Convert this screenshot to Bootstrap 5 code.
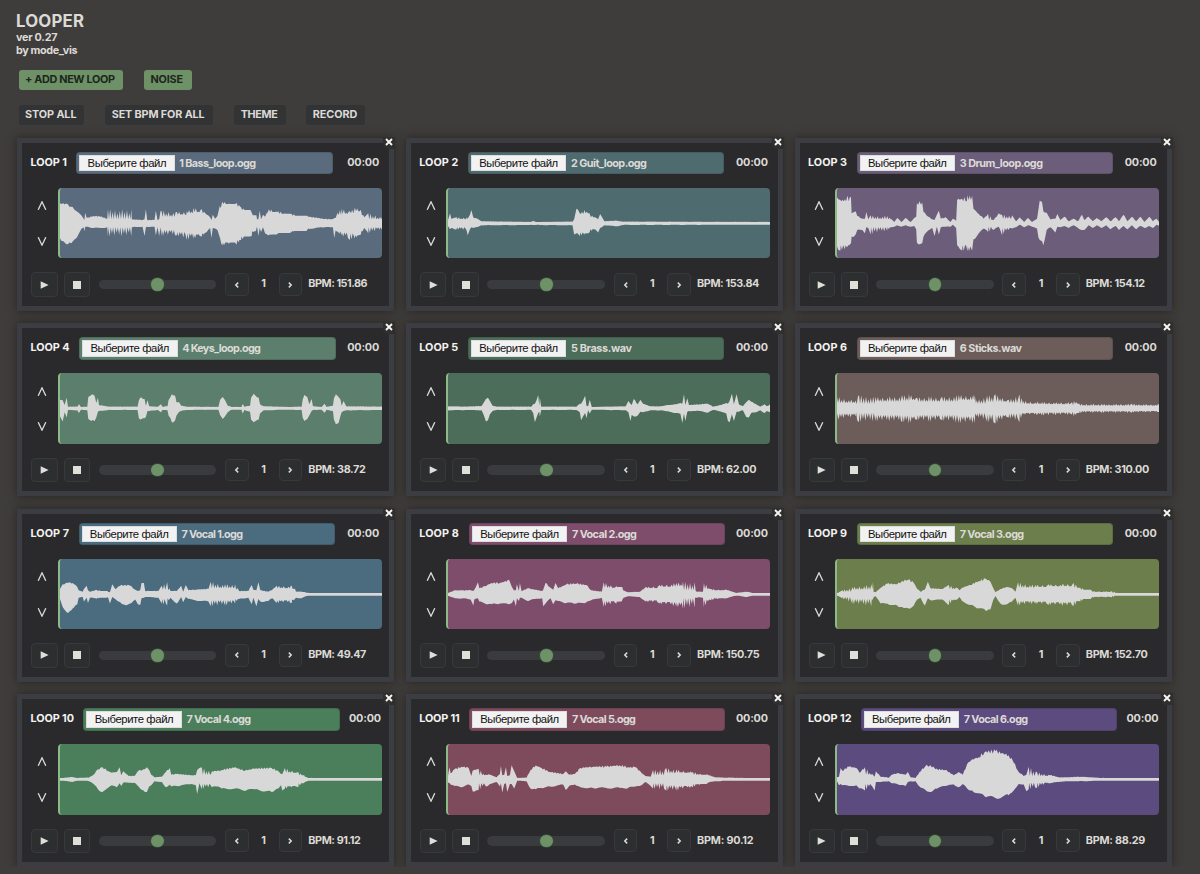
<!DOCTYPE html>
<html lang="ru">
<head>
<meta charset="utf-8">
<meta name="viewport" content="width=device-width, initial-scale=1">
<title>Looper</title>
<link href="https://cdn.jsdelivr.net/npm/bootstrap@5.3.0/dist/css/bootstrap.min.css" rel="stylesheet">
<style>
body{background:#3f3d3b;color:#dcdad6;font-family:Inter,"Liberation Sans",sans-serif;font-size:10.8px;font-weight:700;line-height:12.4px;overflow:hidden}
[data-fit]{white-space:nowrap;display:inline-block}
h1{font-size:16.8px;font-weight:700;line-height:20px;color:#dcdad6}
.page-head{padding:11px 0 0 16px}
.tool-row{padding-left:2.5px}
.tool{height:20px;border:0;border-radius:3px;background:#323334;color:#dcdad6;font-size:10.8px;font-weight:700;line-height:20px;padding:0 0 0 6.5px;text-align:left}
.tool-main{background:#6e9167;color:#1b271b}
.loops{display:grid;grid-template-columns:repeat(3,377px);column-gap:11.75px;row-gap:12.4px;padding:13.2px 0 0 17px}
.loop{position:relative;height:173px;border:5px solid #3b3d42;background:#2a2a2c;box-shadow:0 0 9px rgba(25,18,16,.6)}
.loop-close{position:absolute;right:-6px;top:-6px;width:12px;height:12px;background:#2f2f30;border:0;padding:0;border-radius:0 0 0 5px;display:flex}
.loop-close svg{margin:1px 0 0 2px}
.loop-head{height:22.4px;margin-top:9.2px;padding-left:8.5px}
.loop-title{color:#f4f3f0}
.file-box{width:256.4px;height:22.4px;border-radius:4px;border:1px solid rgba(20,25,25,.16);padding-left:2px}
.file-btn{width:95.5px;height:16.4px;background:#f2f2f2;border:1px solid #ddd;color:#111;font:400 11.3px/14.5px "Liberation Sans",Arial,sans-serif;text-align:center;margin-right:4.5px}
.file-name{padding-top:1.6px}
.loop-mid{margin-top:13.3px;height:70.6px}
.arrows{width:35.5px;height:70.6px;padding:13.5px 0 12.5px 4px}
.wave{width:324.2px;height:70.6px;border-radius:4px;overflow:hidden;border-left:2px solid #8dbb88;display:block}
.loop-foot{margin-top:13.8px;padding-left:9px;height:25px}
.key{border:1.8px solid #38393c;border-radius:4px;background:#2d2e30;padding:0;display:flex;align-items:center;justify-content:center}
.key-lg{width:26.5px;height:24.6px}
.key-sm{width:23.6px;height:22.8px}
.track{width:117.6px;height:9.4px;border-radius:5px;background:#393b3f;display:flex;align-items:center;justify-content:center;margin:0 8.7px}
.thumb{width:12.6px;height:12.6px;border-radius:50%;background:#6e9167;box-shadow:0 0 0 .7px #35503a;flex:none}
.count{width:30px}
</style>
</head>
<body>
<header class="page-head">
  <h1 style="margin-bottom:1.4px"><span data-fit="68">LOOPER</span></h1>
  <div><span data-fit="41.5">ver 0.27</span></div>
  <div><span data-fit="61.5">by mode_vis</span></div>
  <div class="tool-row d-flex" style="margin-top:12.8px">
    <button class="tool tool-main" style="width:104px"><span data-fit="90">+ ADD NEW LOOP</span></button>
    <button class="tool tool-main" style="width:47.5px;margin-left:21.5px"><span data-fit="32.5">NOISE</span></button>
  </div>
  <div class="tool-row d-flex" style="margin-top:14.7px">
    <button class="tool" style="width:65px"><span data-fit="51.5">STOP ALL</span></button>
    <button class="tool" style="width:107.5px;margin-left:21.7px"><span data-fit="93">SET BPM FOR ALL</span></button>
    <button class="tool" style="width:51.5px;margin-left:21.5px"><span data-fit="37">THEME</span></button>
    <button class="tool" style="width:59px;margin-left:20.6px"><span data-fit="44.5">RECORD</span></button>
  </div>
</header>
<main class="loops" id="loops"></main>

<script src="https://cdn.jsdelivr.net/npm/bootstrap@5.3.0/dist/js/bootstrap.bundle.min.js"></script>
<script>
// Envelope points: x, height above, height below, and the level a ragged stretch falls back to.
const loops = [
 {n:'LOOP 1',nw:36.3,bx:45.8,c:'#5b6b7e',f:'1 Bass_loop.ogg',fw:76.7,bpm:'151.86',bw:59.3,w:'4,60,45 14,60,54 28,57,63 38,50,60 48,40,48 60,32,32 68,24,17 75,14,12 77,10,24 80,32,10 84,16,10 105,22,14 125,20,14 146,14,12 148,42,40,12 218,42,38 220,12,12 252,10,10 258,12,38 262,42,12 266,10,10 288,10,10 292,38,36 297,10,12 302,12,38 306,36,12 309,38,38,20 355,34,36,26 385,36,50,30 405,46,46,33 430,42,40,30 445,26,26 455,18,14 459,10,44 463,26,14 470,14,16 477,22,20 484,52,42,46 492,64,66,58 535,62,64,50 548,48,50,40 580,32,38,24 596,12,10 600,12,38 604,38,14 608,12,26 614,26,12 620,20,30 632,42,36,34 660,36,30,29 700,28,26,23 750,20,16 800,13,12 824,12,12 828,16,44 832,16,22 838,32,26,25 850,44,36,28 875,36,50,30 890,47,46,36 908,40,34,24 918,18,14 930,30,30,12 972,20,20'},
 {n:'LOOP 2',nw:39,bx:48.7,c:'#4e6b70',f:'2 Guit_loop.ogg',fw:76,bpm:'153.84',bw:62.3,w:'4,10,8 10,30,18 14,14,14 30,18,18,12 60,18,22,12 63,14,36 70,26,18 74,40,12 80,18,14 95,12,10 104,6,6 250,4,5 262,7,5 268,4,5 378,5,6 383,12,34 390,44,30 400,30,38,28 414,40,34,30 430,28,26,18 445,18,18 455,12,28 461,28,14 466,20,12 474,6,6 510,8,9 530,5,5 972,4,4'},
 {n:'LOOP 3',nw:39,bx:48.7,c:'#6c5d7b',f:'3 Drum_loop.ogg',fw:83.3,bpm:'154.12',bw:59.3,w:'4,78,70 14,70,82,66 28,72,78,66 36,82,70,66 46,78,60 48,30,40 60,36,34 65,22,20 80,14,20 88,14,30 92,34,12 98,12,14 105,24,34,12 155,22,22,12 168,12,12 176,4,10 185,16,6 198,4,10 210,16,6 225,4,10 236,16,8 242,20,18 244,60,58 260,62,60,45 264,34,40 278,20,22 290,12,14 297,10,38 304,26,10 310,38,34 316,14,12 330,18,10 345,4,10 352,14,4 362,8,14 365,70,66 380,74,82,66 396,84,84,70 410,82,82 414,44,48 430,28,30 445,14,16 458,28,26,10 475,10,20 490,30,10 500,26,36,14 530,24,16 542,6,12 553,18,4 566,4,12 578,16,6 590,4,10 605,14,16 609,40,42 613,68,50 620,64,54 624,36,66 634,32,20 645,12,12 660,14,28 666,28,10 675,10,12 688,20,8 700,6,14 715,14,6 728,6,14 740,26,20 747,10,20 760,20,6 772,6,14 785,16,6 798,6,14 813,18,6 826,6,18 841,18,8 851,6,20 865,26,8 877,6,18 890,20,6 903,6,18 915,20,8 928,4,14 942,20,8 953,6,14 964,14,4 972,2,8'},
 {n:'LOOP 4',nw:39,bx:48.7,c:'#5b7f6c',f:'4 Keys_loop.ogg',fw:78.7,bpm:'38.72',bw:57.5,w:'4,26,24 12,24,40 18,10,12 24,32,28 28,5,5 56,5,6 61,12,14 67,4,4 86,5,6 89,34,32 98,40,38 108,38,38 113,16,28 118,32,10 121,10,8 150,5,5 237,5,5 241,24,30 245,32,34 258,28,30 262,8,26 267,24,8 272,6,8 298,5,5 307,12,12 312,5,5 327,6,6 330,24,22 336,34,30 340,42,42 350,38,36 354,18,22 362,18,10 368,8,8 384,5,5 480,4,4 485,26,20 493,34,32 500,24,24 508,8,12 520,4,4 549,4,4 553,13,16 558,5,5 575,8,10 578,32,34 586,44,42 595,34,36 601,32,34 605,12,16 616,6,6 690,4,4 730,5,5 733,26,28 738,40,38 747,34,32 753,12,22 760,28,8 764,6,5 790,4,4 799,14,13 805,4,4 824,8,8 827,30,34 833,42,48 841,34,44 847,26,22 850,8,12 856,22,8 864,6,6 972,5,5'},
 {n:'LOOP 5',nw:39,bx:48.7,c:'#4d6d5b',f:'5 Brass.wav',fw:61,bpm:'62.00',bw:59.5,w:'4,6,6 60,5,5 105,7,6 112,18,22 118,28,40 124,32,36 130,22,18 138,8,8 150,5,5 254,5,5 260,12,14 265,14,42 270,24,28 275,40,14 278,8,10 280,32,24 284,5,5 390,5,5 400,14,12 404,14,36 410,24,24 416,38,14 420,8,30 425,6,6 430,26,16 436,4,4 538,6,6 546,22,12 552,14,38 556,10,20 562,28,24 574,12,22 582,26,10 590,14,12 612,6,6 645,6,6 660,9,9 690,12,14 702,16,16 708,14,44 713,42,16 717,10,38 723,30,10 728,10,8 760,12,8 785,14,13 800,5,5 825,10,10 840,16,16 845,14,38 850,22,42 857,44,18 863,12,38 871,42,10 878,12,10 890,6,6 900,18,26 908,26,28 915,20,14 930,12,12 942,5,6 955,12,14 962,6,8 972,12,12'},
 {n:'LOOP 6',nw:39,bx:48.7,c:'#6c5d5b',f:'6 Sticks.wav',fw:62.3,bpm:'310.00',bw:63.5,w:'4,34,36,16 60,24,24,12 70,40,42,14 120,34,38,20 200,38,40,22 220,42,46,24 245,32,34,20 280,36,40,20 320,34,36,20 370,40,44,24 418,40,44,16 424,24,24,14 455,38,40,18 480,42,46,20 520,26,28,16 552,42,42,14 564,22,18,13 620,19,22,12 710,18,19,10 716,22,24,14 732,14,14,8 800,13,13,8 890,14,13,8 972,12,11'},
 {n:'LOOP 7',nw:38.5,bx:48,c:'#4b6b7e',f:'7 Vocal 1.ogg',fw:61.5,bpm:'49.47',bw:58,w:'4,16,14 12,30,38 22,34,52 34,36,50 46,30,40 56,22,30 60,12,10 72,8,8 76,16,22 84,26,10 88,12,26 94,8,10 115,13,13,10 148,8,8 154,6,28 161,30,8 170,16,14 185,26,24 200,28,32 215,26,28 230,14,16 238,10,30 245,12,32 249,34,12 256,34,10 260,10,8 300,10,10 310,26,28,14 326,36,34,12 336,10,10 355,10,28 368,26,8 374,8,24 382,28,8 390,12,14 410,14,18 450,16,22 457,38,36,18 500,30,34,18 530,30,28,14 542,10,14 570,10,10 580,28,30 585,14,10 594,12,36 600,36,14 606,12,22 630,8,20 642,14,12 655,26,26,18 700,26,26,16 713,8,10 730,8,12 745,5,5 760,2,3 972,3,3'},
 {n:'LOOP 8',nw:39.5,bx:49.7,c:'#7f4d6c',f:'7 Vocal 2.ogg',fw:65,bpm:'150.75',bw:62.5,w:'4,4,4 25,12,12 50,12,12 72,12,16 80,10,34 83,14,16 94,36,12 98,18,22 115,24,28 135,34,30 160,34,28 188,42,30 196,22,26 202,12,16 208,12,36 211,30,12 217,10,20 220,34,10 225,10,10 245,18,20 265,14,14 287,10,12 290,14,36 297,34,28 312,20,12 320,14,30 327,34,18 335,18,20 360,30,26 390,32,28 420,28,24 434,12,18 466,8,10 472,36,38,20 510,24,28,22 530,12,12 545,6,6 580,8,8 600,22,22,18 640,28,28,23 690,34,36,24 710,38,42,12 745,36,40,10 752,8,10 770,8,10 773,34,40,16 795,16,18,12 840,14,12 870,4,4 903,8,8 918,4,4 972,3,3'},
 {n:'LOOP 9',nw:39,bx:48.7,c:'#6b7e4b',f:'7 Vocal 3.ogg',fw:64.5,bpm:'152.70',bw:62,w:'4,2,2 20,12,12,8 50,22,28,14 107,30,36,16 112,38,16 114,8,8 120,6,6 135,20,28 155,32,28 185,30,34 200,40,38 218,44,42 235,34,34 245,16,16 255,8,10 268,14,34 277,38,12 285,18,18 320,16,16 340,28,32,16 365,20,16 372,12,8 380,20,20 405,28,32 430,40,42 452,46,50 465,38,46 473,20,18 480,6,5 495,16,28 515,22,30 530,18,22 540,8,10 548,36,34,20 600,28,28,22 640,30,32,24 715,34,36,20 735,20,22,14 770,10,10,7 830,9,9,4 855,3,3 972,3,3'},
 {n:'LOOP 10',nw:43.5,bx:52.9,c:'#4b7f5b',f:'7 Vocal 4.ogg',fw:64.7,bpm:'91.12',bw:52.5,w:'4,3,3 40,7,8 55,4,4 90,5,5 105,14,14 118,30,30 132,36,38 145,26,28 160,20,18 175,22,24 183,36,12 188,12,20 194,24,10 210,10,10 228,10,10 240,26,22 255,30,34 265,36,38 272,28,22 278,14,18 288,6,6 310,8,8 322,22,24 334,34,16 338,14,22 355,16,20 400,12,14 412,12,18 416,28,44 423,34,12 430,36,30,14 460,24,24 475,24,22 490,28,28 530,36,28 555,26,34 590,32,30 640,34,38 660,24,28 668,16,18 672,16,34 680,34,28,20 720,22,24,12 740,8,8 752,4,4 972,3,3'},
 {n:'LOOP 11',nw:40.5,bx:49.7,c:'#7e4b5d',f:'7 Vocal 5.ogg',fw:64,bpm:'90.12',bw:56.5,w:'4,10,10 8,36,10 12,18,16 24,30,20 45,38,24 66,34,16 74,10,20 78,26,36 96,32,32,12 118,14,22 130,14,14 150,6,8 160,16,22 163,40,12 167,12,40 173,14,14 178,36,12 182,10,38 190,12,14 195,42,14 203,24,28 212,4,4 240,5,6 252,28,28 268,42,30 285,34,26 310,22,22 350,16,16 358,24,32 368,14,20 385,16,16 402,34,24 440,38,26 480,38,26 520,42,26 545,36,26 568,36,22 585,20,18 597,10,8 613,8,20 620,28,28,12 660,34,34,18 690,30,34,20 740,22,24,14 785,14,10 805,6,6 840,5,4 972,3,3'},
 {n:'LOOP 12',nw:43.5,bx:52.7,c:'#5c4b7e',f:'7 Vocal 6.ogg',fw:64.5,bpm:'88.29',bw:59.5,w:'4,6,6 10,8,18 15,34,14 20,26,18 40,38,20 62,34,18 72,20,28 88,36,34,14 110,16,22 117,8,34 121,24,8 135,8,8 160,5,6 168,14,12 185,18,14 210,14,20 217,22,8 225,6,6 240,4,6 252,22,22 270,40,32 285,42,38 300,30,28 330,28,20 355,12,16 370,22,24 382,14,14 395,46,28 410,60,34 430,66,42 448,82,52 480,84,56 520,72,48 535,50,34 550,22,14 565,10,16 573,14,36 580,38,30,10 605,22,26,10 640,14,12 670,6,8 700,6,6 730,8,6 800,4,4 972,3,3'}
];

const MID = 106;
function wavePath(text) {
  const pts = text.split(' ').map(p => p.split(',').map(Number));
  const top = [], bottom = [];
  pts.forEach((p, i) => {
    const [x, u, d, floor] = p, next = pts[i + 1];
    top.push([x, u]); bottom.push([x, d]);
    if (!next) return;
    const at = s => {
      const t = (s - x) / (next[0] - x);
      return [u + (next[1] - u) * t, d + (next[2] - d) * t];
    };
    if (floor) {
      let k = 0;
      for (let s = x + 3.2; s < next[0] - 1; s += 3.6, k++) {
        const wobble = [1, .8, .93, .72, .88][(k >> 1) % 5], [nu, nd] = at(s);
        top.push([s, k % 2 ? Math.max(floor, nu * wobble) : floor]);
        bottom.push([s - 2, k % 2 ? Math.max(floor, nd * wobble) : floor]);
      }
    } else if (next[0] - x > 9) {
      // calm stretches still rise and fall in small steps
      for (let s = x + 4; s < next[0] - 3; s += 4) {
        const [nu, nd] = at(s);
        top.push([s, nu * (1 + .08 * Math.sin(s * 2.3))]);
        bottom.push([s, nd * (1 + .08 * Math.sin(s * 1.7 + 1))]);
      }
    }
  });
  const line = (a, sign) => a.map(([x, h]) => x.toFixed(1) + ' ' + (MID + sign * Math.max(4, h)).toFixed(1));
  return 'M' + line(top, -1).concat(line(bottom, 1).reverse()).join('L') + 'Z';
}

const chevron = d => `<svg width="6" height="8" viewBox="0 0 6 8" fill="none" stroke="#dcdad6" stroke-width="1.5"><path d="${d}"/></svg>`;
document.getElementById('loops').innerHTML = loops.map((l, i) => `
<section class="loop">
  <button class="loop-close" aria-label="Close"><svg width="8" height="8" viewBox="0 0 8 8"><path d="M1 1L7 7M7 1L1 7" stroke="#f6f5f2" stroke-width="1.9"/></svg></button>
  <div class="loop-head d-flex align-items-center">
    <div class="loop-title" style="width:${l.bx}px"><span data-fit="${l.nw}">${l.n}</span></div>
    <div class="file-box d-flex align-items-center" style="background:${l.c}">
      <div class="file-btn"><span data-fit="79">Выберите файл</span></div><span class="file-name" data-fit="${l.fw}">${l.f}</span>
    </div>
    <div class="ms-auto" style="padding-right:${i === 9 || i === 11 ? 8 : 9.8}px"><span data-fit="32">00:00</span></div>
  </div>
  <div class="loop-mid d-flex">
    <div class="arrows d-flex flex-column justify-content-between align-items-center">
      <svg width="10" height="9" viewBox="0 0 10 9" fill="none" stroke="#dcdad6" stroke-width="1.3"><path d="M1.2 8.8L5 .8L8.8 8.8"/></svg>
      <svg width="10" height="9" viewBox="0 0 10 9" fill="none" stroke="#dcdad6" stroke-width="1.3"><path d="M1.2 .2L5 8.2L8.8 .2"/></svg>
    </div>
    <svg class="wave" viewBox="4 0 968 212" preserveAspectRatio="none" style="background:${l.c}"><path fill="#d8d8d8" d="${wavePath(l.w)}"/></svg>
  </div>
  <div class="loop-foot d-flex align-items-center">
    <button class="key key-lg" aria-label="Play"><svg width="9" height="8" viewBox="0 0 9 8"><path d="M.7 .3L8.6 4L.7 7.7Z" fill="#e0ded9"/></svg></button>
    <button class="key key-lg" style="margin-left:6px" aria-label="Stop"><svg width="8" height="8" viewBox="0 0 8 8"><path d="M0 0H8V8H0Z" fill="#e0ded9"/></svg></button>
    <div class="track"><div class="thumb"></div></div>
    <button class="key key-sm" aria-label="Less">${chevron('M4.2 1.6L1.8 4L4.2 6.4')}</button>
    <div class="count text-center">1</div>
    <button class="key key-sm" aria-label="More">${chevron('M1.8 1.6L4.2 4L1.8 6.4')}</button>
    <div style="margin-left:6.2px"><span data-fit="${l.bw}">BPM: ${l.bpm}</span></div>
  </div>
</section>`).join('');

// Track every label so that its line takes its set width.
document.querySelectorAll('[data-fit]').forEach(el => {
  const gap = (el.dataset.fit - el.getBoundingClientRect().width) / (el.textContent.length - 1);
  el.style.letterSpacing = gap.toFixed(3) + 'px';
  el.style.marginRight = (-gap).toFixed(3) + 'px';
});
</script>
</body>
</html>
